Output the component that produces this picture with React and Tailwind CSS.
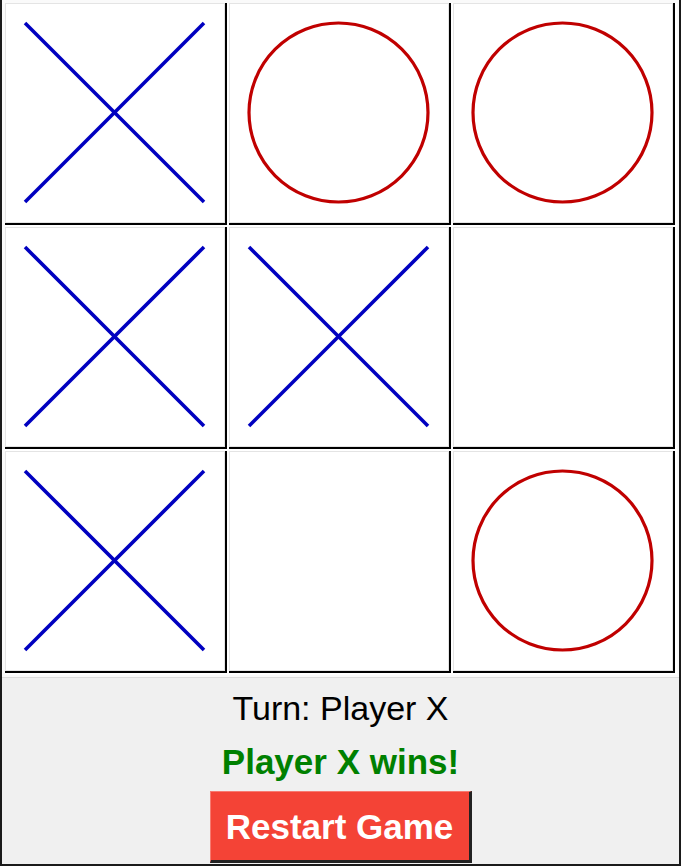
import React from 'react';

const board = [
    ['X', 'O', 'O'],
    ['X', 'X', ''],
    ['X', '', 'O'],
];

function Mark({ value }) {
    if (value === 'X') {
        return (
            <svg width="220" height="220" viewBox="0 0 220 220" className="block">
                <line x1="20" y1="20" x2="199" y2="199" stroke="#0000c0" strokeWidth="3.6" />
                <line x1="199" y1="20" x2="20" y2="199" stroke="#0000c0" strokeWidth="3.6" />
            </svg>
        );
    }
    if (value === 'O') {
        return (
            <svg width="220" height="220" viewBox="0 0 220 220" className="block">
                <circle cx="109.5" cy="109.5" r="89.5" fill="none" stroke="#c00000" strokeWidth="3.2" />
            </svg>
        );
    }
    return <div className="w-[220px] h-[220px]" />;
}

function Cell({ value }) {
    return (
        <div className="w-[224px] h-[224px] bg-white">
            <div className="w-[222px] h-[222px] border-r-2 border-b-2 border-black bg-white relative">
                <div className="absolute inset-0 border border-[#e4e4e4] pointer-events-none" />
                <Mark value={value} />
            </div>
        </div>
    );
}

export default function App() {
    return (
        <div className="w-[684px] h-[867px] bg-white" style={{ fontFamily: '"Liberation Sans", Arial, sans-serif' }}>
            <div className="w-[681px] h-[866px] border-l-2 border-r-2 border-b-2 border-[#1a1a1a] bg-[#f0f0f0] flex flex-col">
                {/* board */}
                <div className="pt-[3px] pl-[3px] pb-[2px] bg-[#fafafa]">
                    <div className="grid grid-cols-3 w-[672px]">
                        {board.flat().map((v, i) => (
                            <Cell key={i} value={v} />
                        ))}
                    </div>
                </div>
                <div className="h-px bg-[#dcdcdc]" />

                {/* status panel */}
                <div className="flex-1 flex flex-col items-center pt-[11px]">
                    <div className="h-[38px] leading-[38px] text-[34px] text-black">Turn: Player X</div>
                    <div className="mt-[16px] h-[38px] leading-[38px] text-[35px] font-bold text-[#008000]">Player X wins!</div>
                    <button className="mt-[10px] w-[262px] h-[72px] bg-[#f44336] text-white text-[35px] font-bold border-t border-l border-t-[#f77a70] border-l-[#f77a70] border-r-[3px] border-b-[3px] border-r-[#222] border-b-[#222] leading-none">
                        Restart Game
                    </button>
                </div>
            </div>
        </div>
    );
}
